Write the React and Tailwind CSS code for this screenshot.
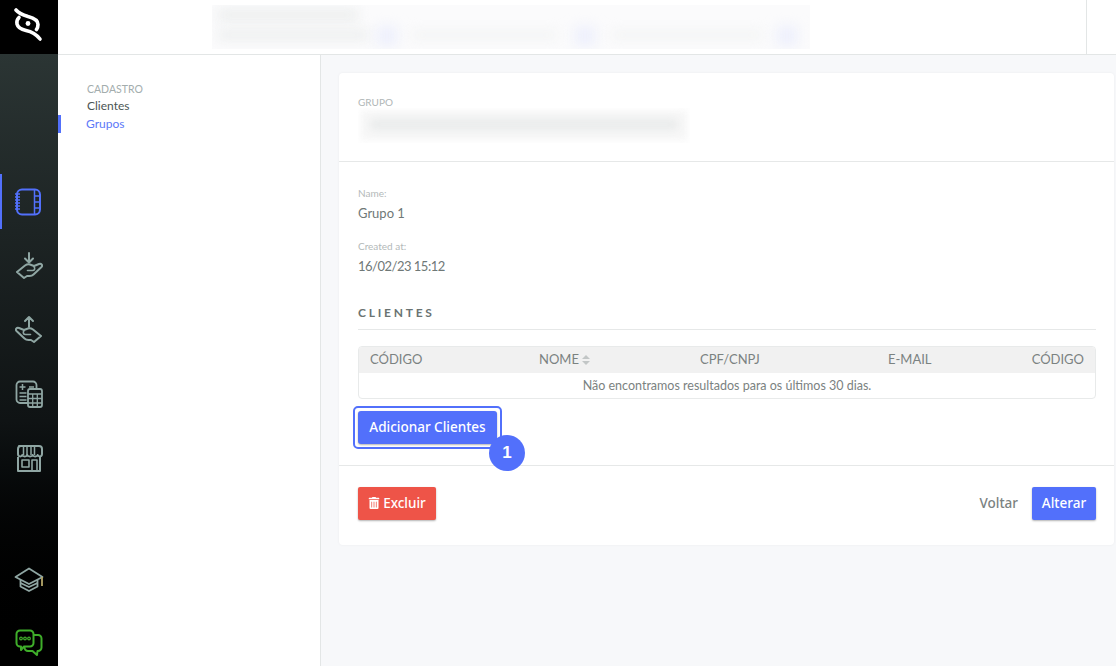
import React from "react";
import { FaTrashAlt } from "react-icons/fa";

const bodyFont = { fontFamily: '"Lato", "Noto Sans", sans-serif' };

// Side rail icons, drawn to match the reference
const ChipIcon = () => (
    <svg width="28" height="28" viewBox="0 0 28 28" fill="none" stroke="#5270fb" strokeWidth="2">
        <rect x="3" y="1.5" width="23" height="25" rx="5" />
        <path d="M20.500 2v24M21 8h5M21 14h5M21 20h5" strokeWidth="1.500" />
        <path d="M1 6h5M1 9h5M1 12h5M1 15h5M1 18h5M1 21h5" strokeWidth="1.400" />
    </svg>
);

const HandShape = () => (
    <>
        <path d="M2 21l8-6.500c1.500-1 3-1.500 5-1l4 1.500 5-2c2.500-.8 4 1.500 2.500 3l-8 7.500c-1 1-2.500 1.500-4 1.500H12l-3 2z" />
        <path d="M12.500 19.500h5c2 0 3-1.500 1.500-4" strokeWidth="1.600" />
    </>
);

const HandDownIcon = () => (
    <svg width="28" height="30" viewBox="0 0 28 30" fill="none" stroke="#8fa6a3" strokeWidth="2" strokeLinejoin="round" strokeLinecap="round">
        <path d="M14 2v9.500M10 7.500l4 4 4-4" />
        <HandShape />
    </svg>
);

const HandUpIcon = () => (
    <svg width="28" height="30" viewBox="0 0 28 30" fill="none" stroke="#8fa6a3" strokeWidth="2" strokeLinejoin="round" strokeLinecap="round">
        <path d="M14 12V2M10 6l4-4 4 4" />
        <g transform="translate(28 0) scale(-1 1)">
            <HandShape />
        </g>
    </svg>
);

const CalcIcon = () => (
    <svg width="28" height="28" viewBox="0 0 28 28" fill="none" stroke="#8fa6a3" strokeWidth="1.800" strokeLinejoin="round">
        <path d="M13 23H5a3.500 3.500 0 0 1-3.500-3.500V5A3.500 3.500 0 0 1 5 1.500h13A3.500 3.500 0 0 1 21.500 5v3" />
        <path d="M4.500 7h6M7.500 4v6M14 7h5M4.500 13h7M4.500 16.500h7M4.500 20h7" strokeWidth="1.500" />
        <rect x="13" y="9" width="14" height="18" rx="2" />
        <path d="M13 14h14M13 18.500h14M13 23h14M17.700 14v13M22.300 14v13" strokeWidth="1.300" />
    </svg>
);

const StoreIcon = () => (
    <svg width="28" height="28" viewBox="0 0 28 28" fill="none" stroke="#8fa6a3" strokeWidth="2" strokeLinejoin="round">
        <path d="M4 2h20c2 0 3 1 3 3v5c0 3-3.500 3-4.300 1-.8 2-4.200 2-5 0-.8 2-4.600 2-5.400 0-.8 2-4.200 2-5 0-.8 2-4.300 2-4.300-1V5c0-2 1-3 3-3z" />
        <path d="M8.500 2v9M12 2v9M16 2v9M19.500 2v9" strokeWidth="1.500" />
        <path d="M3 13v14h22V13" />
        <rect x="7" y="16" width="7" height="7" strokeWidth="1.600" />
        <path d="M17 27V16h5v11" strokeWidth="1.600" />
    </svg>
);

const CapIcon = () => (
    <svg width="30" height="26" viewBox="0 0 30 26" fill="none" stroke="#8fa6a3" strokeWidth="1.800" strokeLinejoin="round">
        <path d="M15 1.500L1.500 10 15 17l13.500-7z" />
        <path d="M6.500 13v6.500L15 24l8.500-4.500V13" />
        <path d="M6.500 16l8.500 4 8.500-4" />
        <path d="M28 10v9" stroke="#b5a76a" />
    </svg>
);

const ChatIcon = () => (
    <svg width="28" height="28" viewBox="0 0 28 28" fill="none" stroke="#3fae2a" strokeWidth="2" strokeLinejoin="round">
        <path d="M5 1.500h10a3.500 3.500 0 0 1 3.500 3.500v9a3.500 3.500 0 0 1-3.500 3.500H9l-3 3.500v-3.500H5A3.500 3.500 0 0 1 1.500 14V5A3.500 3.500 0 0 1 5 1.500z" />
        <path d="M18.500 6H23a3.500 3.500 0 0 1 3.500 3.500v9A3.500 3.500 0 0 1 23 22h-.5l-.5 4-4.500-4H13a3.500 3.500 0 0 1-3.500-3.500v-1" />
        <circle cx="6" cy="9.500" r="1.300" strokeWidth="1.200" />
        <circle cx="10" cy="9.500" r="1.300" strokeWidth="1.200" />
        <circle cx="14" cy="9.500" r="1.300" strokeWidth="1.200" />
    </svg>
);

// Two S strokes round a dot, open on the upper left and lower right
const Logo = () => (
    <svg width="30" height="38" viewBox="0 0 30 38" fill="none" stroke="#fff" strokeWidth="3.600" strokeLinecap="round" strokeLinejoin="round">
        <path d="M3 2c3 3.500 7 5 12 6.500 6 1.500 10 3.500 10 8 0 2-.5 3.500-1.500 5" />
        <path d="M6 9.500c-2 2-2.500 4-2 6.500 1 4 4.500 5.500 9 6.500 6 1.200 10 3.500 14 8.500" />
        <circle cx="15" cy="15.500" r="2.400" fill="#fff" stroke="none" />
    </svg>
);

const railItems = [
    { id: "entrada", icon: <HandDownIcon /> },
    { id: "saida", icon: <HandUpIcon /> },
    { id: "calculo", icon: <CalcIcon /> },
    { id: "loja", icon: <StoreIcon /> },
];

const Rail = () => (
    <aside className="w-[58px] shrink-0 flex flex-col bg-gradient-to-b from-[#2b3534] via-[#0f1314] via-60% to-black">
        <div className="flex-1 flex flex-col pt-[120px]">
            <div className="h-[55px] mb-[5px] border-l-2 border-[#5270fb] pr-[5px] flex items-center justify-center">
                <ChipIcon />
            </div>
            {railItems.map((item) => (
                <div key={item.id} className="h-[64px] flex items-center justify-center pr-[1px]">
                    {item.icon}
                </div>
            ))}
        </div>
        <div className="flex flex-col items-center gap-[36px] pb-[9px]">
            <CapIcon />
            <ChatIcon />
        </div>
    </aside>
);

const Field = ({ label, value, valueClass = "" }) => (
    <div>
        <p className="text-[10px] leading-[14px] text-[#b3b9b9]">{label}</p>
        <p className={`mt-[4px] text-[13px] leading-[18px] text-[#6f7877] ${valueClass}`}>{value}</p>
    </div>
);

const SortIcon = () => (
    <svg width="8" height="10" viewBox="0 0 8 10" fill="#c2c6c6" className="inline-block ml-[3px] mb-[1px]">
        <path d="M4 0l4 4H0zM4 10L0 6h8z" />
    </svg>
);

const columns = ["CÓDIGO", "NOME", "CPF/CNPJ", "E-MAIL", "CÓDIGO"];

const App = () => (
    <div className="h-[666px] w-[1116px] overflow-hidden flex flex-col bg-white" style={bodyFont}>
        <div className="flex flex-1 min-h-0">
            <div className="w-[58px] shrink-0 flex flex-col">
                <div className="h-[54px] shrink-0 bg-black flex items-center justify-center pr-[2px]">
                    <Logo />
                </div>
                <div className="flex-1 flex min-h-0">
                    <Rail />
                </div>
            </div>

            <div className="flex-1 flex flex-col min-w-0">
                {/* Top bar with the blurred summary */}
                <header className="h-[55px] shrink-0 border-b border-[#e3e6e6] flex">
                    <div className="flex-1 pl-[154px] pt-[5px]">
                        <div className="relative h-[44px] w-[598px] overflow-hidden bg-[#fbfbfc]">
                            <div className="absolute left-[6px] top-[4px] h-[12px] w-[140px] bg-[#eceeee] blur-[6px]" />
                            <div className="absolute left-[6px] top-[25px] h-[10px] w-[150px] bg-[#eceeee] blur-[6px]" />
                            <div className="absolute left-[166px] top-[22px] h-[18px] w-[18px] bg-[#eaedfc] blur-[7px]" />
                            <div className="absolute left-[200px] top-[26px] h-[8px] w-[145px] bg-[#f2f3f3] blur-[6px]" />
                            <div className="absolute left-[364px] top-[22px] h-[18px] w-[18px] bg-[#eaedfc] blur-[7px]" />
                            <div className="absolute left-[400px] top-[26px] h-[8px] w-[150px] bg-[#f2f3f3] blur-[6px]" />
                            <div className="absolute left-[566px] top-[22px] h-[18px] w-[18px] bg-[#eaedfc] blur-[7px]" />
                        </div>
                    </div>
                    <div className="w-[30px] border-l border-[#e3e6e6]" />
                </header>

                <div className="flex-1 flex min-h-0">
                    {/* Sub menu */}
                    <nav className="w-[263px] shrink-0 border-r border-[#e3e6e6] pt-[25px] text-[12px] leading-[18px]">
                        <p className="pl-[29px] text-[10.500px] text-[#a3adad] h-[17px]">CADASTRO</p>
                        <p className="pl-[29px] text-[#4b5554]">Clientes</p>
                        <p className="border-l-[3px] border-[#5270fb] pl-[25px] text-[#5c78f8]">Grupos</p>
                    </nav>

                    <main className="flex-1 bg-[#f7f8fa] pl-[18px] pr-[2px] pt-[18px]">
                        <section className="bg-white rounded-[4px] shadow-[0_0_3px_rgba(0,0,0,0.05)] h-[472px] flex flex-col">
                            <div className="h-[89px] shrink-0 border-b border-[#e6e8e8] pl-[19px] pr-[18px] pt-[23px]">
                                <p className="text-[10px] leading-[12px] text-[#b0b6b6]">GRUPO</p>
                                <div className="relative h-[35px] w-[332px] overflow-hidden">
                                    <div className="absolute inset-[2px] bg-[#f8f8f8] blur-[3px]" />
                                    <div className="absolute left-[12px] top-[11px] h-[11px] w-[308px] bg-[#e8eaea] blur-[5px]" />
                                </div>
                            </div>

                            <div className="flex-1 pl-[19px] pr-[18px] pt-[24px]">
                                <Field label="Name:" value="Grupo 1" />
                                <div className="mt-[17px]">
                                    <Field label="Created at:" value="16/02/23 15:12" valueClass="tracking-[-0.500px]" />
                                </div>

                                <h2 className="mt-[30px] pb-[8px] border-b border-[#e6e8e8] text-[12px] leading-[16px] font-bold tracking-[0.230em] text-[#6a7372]">CLIENTES</h2>

                                <div className="mt-[16px] rounded-[4px] border border-[#e8eaea] overflow-hidden">
                                    <div className="h-[26px] bg-[#f1f1f1] grid grid-cols-[169px_161px_188px_1fr_auto] items-center px-[11px] text-[13px] text-[#7b8281]">
                                        {columns.map((col, i) => (
                                            <span key={col + i}>
                                                {col}
                                                {col === "NOME" && <SortIcon />}
                                            </span>
                                        ))}
                                    </div>
                                    <p className="h-[25px] text-center text-[12.500px] leading-[25px] text-[#7b8281]">
                                        Não encontramos resultados para os últimos 30 dias.
                                    </p>
                                </div>

                                <div className="relative mt-[7px] w-fit -ml-[5px] rounded-[5px] border-2 border-[#5270fb] p-[3px]">
                                    <button className="block h-[33px] w-[139px] rounded-[3px] bg-[#5270fb] text-[13.500px] font-medium text-white shadow-[0_1px_2px_rgba(0,0,0,0.3)]" style={{ fontFamily: '"Noto Sans", sans-serif' }}>
                                        Adicionar Clientes
                                    </button>
                                    <span className="absolute -right-[25px] top-[27px] flex h-[36px] w-[36px] items-center justify-center rounded-full bg-[#5270fb] text-[17px] font-bold text-white" style={{ fontFamily: '"Liberation Sans", sans-serif' }}>1</span>
                                </div>
                            </div>

                            <div className="h-[80px] shrink-0 border-t border-[#e6e8e8] pl-[19px] pr-[18px] flex items-center justify-between pb-[5px]" style={{ fontFamily: '"Noto Sans", sans-serif' }}>
                                <button className="h-[33px] w-[78px] rounded-[2px] bg-[#ee5448] text-[13.500px] font-medium text-white flex items-center justify-center gap-[3px] shadow-[0_1px_2px_rgba(0,0,0,0.3)]">
                                    <FaTrashAlt className="text-[12px]" />
                                    Excluir
                                </button>
                                <div className="flex items-center gap-[14px]">
                                    <span className="text-[13.500px] font-medium text-[#7b8281]">Voltar</span>
                                    <button className="h-[33px] w-[64px] rounded-[2px] bg-[#5270fb] text-[13.500px] font-medium text-white shadow-[0_1px_2px_rgba(0,0,0,0.3)]">Alterar</button>
                                </div>
                            </div>
                        </section>
                    </main>
                </div>
            </div>
        </div>
    </div>
);

export default App;
